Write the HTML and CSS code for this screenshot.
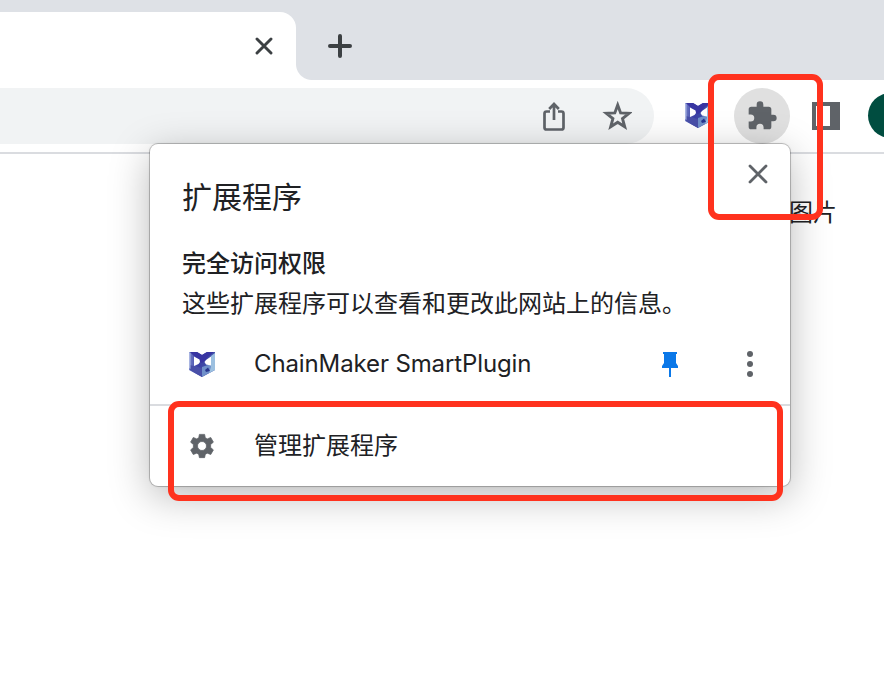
FILE: index.html
```html
<!DOCTYPE html>
<html lang="zh-CN">
<head>
<meta charset="utf-8">
<title>扩展程序</title>
<link rel="stylesheet" href="styles.css">
</head>
<body>
<svg class="defs" width="0" height="0" aria-hidden="true">
  <defs>
    <linearGradient id="lg" x1="0" y1="0" x2="1" y2="0">
      <stop offset="0" stop-color="#7380c8"/><stop offset=".35" stop-color="#3a3fa4"/><stop offset="1" stop-color="#4458ac"/>
    </linearGradient>
    <filter id="soft"><feGaussianBlur stdDeviation=".7"/></filter>
    <symbol id="logo" viewBox="0 0 28 28">
      <g filter="url(#soft)">
        <path fill="url(#lg)" d="M1 2h8l5 3 5-3h8v18l-13 7-13-7z"/>
        <path fill="#3836a2" d="M2 2h7l5 3 5-3h7l-6 5-3 4-3 2-4-2-3-4z"/>
        <path fill="#6f90ca" d="M14 17l12-4v7l-12 7z"/>
        <path fill="#9cc0e0" d="M23 6l4-3v17l-6 3 2-6z"/>
        <path fill="#4850a8" d="M2 15l12 3v9L2 20z"/>
        <path fill="#fff" d="M6 6.500l5.500 3 .5 2.500-1.500 2-4.500 2zM23 6.500L18 10l-1.500 2 1.500 2.500 5 1z"/>
        <path fill="#27358f" d="M17 20l3-2.500 2 3.500-4 1z"/>
        <path fill="#a9b5e2" d="M1 2l1.500 1v16L1 18z"/>
      </g>
    </symbol>
  </defs>
</svg>
<header class="tabs">
  <div class="tab">
    <svg width="18" height="18" viewBox="0 0 18 18"><path class="line" d="M2 2l14 14M16 2L2 16"/></svg>
  </div>
  <div class="strip">
    <svg width="24" height="24" viewBox="0 0 24 24"><path class="plus" d="M12 2v20M2 12h20"/></svg>
  </div>
</header>
<nav class="toolbar">
  <div class="address">
    <svg width="24" height="30" viewBox="0 0 24 30"><path class="share" d="M8 10.500H4.500a2 2 0 0 0-2 2v14a2 2 0 0 0 2 2h15a2 2 0 0 0 2-2v-14a2 2 0 0 0-2-2H16M12 19V3.500M7.200 8L12 3l4.800 5"/></svg>
    <svg width="30" height="30" viewBox="0 0 30 30"><path class="star" d="M15 4l2.900 7.900 8.500.4-6.600 5.300 2.200 8.200-7-4.600-7 4.600 2.200-8.200-6.600-5.300 8.500-.4z" transform="translate(.7 0)"/></svg>
  </div>
  <svg class="pinned" width="28" height="28"><use href="#logo"/></svg>
  <div class="puzzle">
    <svg width="32" height="32" viewBox="0 0 24 24"><path d="M20.500 11H19V7a2 2 0 0 0-2-2h-4V3.500a2.500 2.500 0 0 0-5 0V5H4a2 2 0 0 0-2 2v3.800h1.500a2.700 2.700 0 0 1 0 5.400H2V20a2 2 0 0 0 2 2h3.800v-1.500a2.700 2.700 0 0 1 5.400 0V22H17a2 2 0 0 0 2-2v-4h1.500a2.500 2.500 0 0 0 0-5z"/></svg>
  </div>
  <div class="side"></div>
  <div class="avatar"></div>
</nav>
<main class="page"><span>图片</span></main>

<section class="popup">
  <div class="head">
    <h1>扩展程序</h1>
    <svg width="20" height="20" viewBox="0 0 20 20"><path class="dismiss" d="M2 2l16 16M18 2L2 18"/></svg>
  </div>
  <h2>完全访问权限</h2>
  <p>这些扩展程序可以查看和更改此网站上的信息。</p>
  <div class="row">
    <svg class="icon" width="28" height="28"><use href="#logo"/></svg>
    <span class="name">ChainMaker SmartPlugin</span>
    <svg class="pin" width="16" height="28" viewBox="0 0 16 28"><path d="M1 2h14v2h-1v9l2 3v2H9v9H7v-9H0v-2l2-3V4H1z"/></svg>
    <svg class="more" width="6" height="26" viewBox="0 0 6 26"><circle cx="3" cy="3" r="3"/><circle cx="3" cy="13" r="3"/><circle cx="3" cy="23" r="3"/></svg>
  </div>
  <div class="manage">
    <svg class="gear" width="30" height="30" viewBox="0 0 24 24"><path fill-rule="evenodd" stroke="#5f6368" stroke-width=".6" stroke-linejoin="round" d="M9.900 2.700h4.200l.5 2.600 1.600 1 2.800-1.100 2.100 3.700-2.200 1.900v2.400l2.200 1.900-2.100 3.700-2.800-1.100-1.600 1-.5 2.600H9.900l-.5-2.600-1.600-1L5 18.800l-2.100-3.700 2.200-1.900v-2.400L2.900 8.900 5 5.200l2.800 1.100 1.600-1zM12 8.400a3.600 3.600 0 1 0 0 7.200 3.600 3.600 0 0 0 0-7.200z"/></svg>
    <span>管理扩展程序</span>
  </div>
</section>
<div class="mark mark-top"></div>
<div class="mark mark-bottom"></div>
</body>
</html>
```
FILE: styles.css
```css
* { box-sizing: border-box; }
body {
  margin: 0;
  height: 700px;
  overflow: hidden;
  position: relative;
  background: #fff;
  color: #202124;
  font: 24px/36px Inter, "Noto Sans CJK SC", sans-serif;
}
svg { display: block; flex: none; }
.defs { position: absolute; }
.tabs { display: flex; height: 80px; padding-top: 12px; background: #dee1e6; }
.tab {
  width: 296px;
  display: flex;
  align-items: center;
  justify-content: flex-end;
  padding-right: 23px;
  background: #fff;
  border-top-right-radius: 16px;
}
.strip {
  flex: 1;
  display: flex;
  align-items: center;
  padding-left: 32px;
  background: radial-gradient(circle at 16px 0, #dee1e6 15.500px, #fff 16.500px) left bottom / 16px 16px no-repeat;
}
.line, .plus, .share, .star, .dismiss { fill: none; stroke: #5f6368; }
.line { stroke: #3c4043; stroke-width: 2.900; stroke-linecap: round; }
.plus { stroke: #3c4043; stroke-width: 4; stroke-linecap: round; }
.share { stroke-width: 2.700; }
.star { stroke-width: 2.900; }
.dismiss { stroke-width: 2.800; stroke-linecap: round; }
.toolbar { display: flex; height: 74px; padding: 8px 0; border-bottom: 2px solid #dadce0; }
.address {
  flex: none;
  width: 654px;
  height: 56px;
  display: flex;
  align-items: center;
  justify-content: flex-end;
  gap: 36px;
  padding-right: 22px;
  background: #f1f3f4;
  border-radius: 0 28px 28px 0;
}
.pinned { margin: 13px 22px 0 30px; }
.puzzle {
  flex: none;
  width: 56px;
  height: 56px;
  padding: 12px;
  border-radius: 50%;
  background: #e0e0e0;
}
.puzzle path, .gear path, .more { fill: #5f6368; }
.side {
  flex: none;
  width: 28px;
  height: 28px;
  margin: 14px 0 0 22px;
  border: 4px solid #5f6368;
  border-right-width: 10px;
}
.avatar { flex: none; width: 45px; height: 45px; margin: 5px 0 0 28px; border-radius: 50%; background: #004d40; }
.page { display: flex; justify-content: flex-end; padding: 41px 47px 0 0; }
.popup {
  position: absolute;
  left: 150px;
  top: 144px;
  width: 640px;
  height: 342px;
  background: #fff;
  border-radius: 8px;
  box-shadow: 0 0 0 1px rgba(0,0,0,.2), 0 0 3px rgba(0,0,0,.12), 0 10px 40px rgba(0,0,0,.28);
}
.head { display: flex; justify-content: space-between; padding: 20px 22px 0 32px; }
h1 { margin: 11px 0 0; font-size: 30px; line-height: 44px; font-weight: 400; }
h2 { margin: 27px 32px 0; font-size: 24px; line-height: 36px; font-weight: 500; }
p { margin: 4px 32px 0; white-space: nowrap; }
.row { display: flex; align-items: center; height: 82px; padding-top: 1px; }
.icon { margin-left: 38px; }
.name { margin-left: 38px; flex: 1; white-space: nowrap; letter-spacing: -.12px; }
.pin { fill: #0b78e8; margin-right: 69px; }
.more { margin-right: 37px; }
.manage { display: flex; align-items: center; height: 82px; border-top: 2px solid #dadce0; padding-left: 37px; }
.manage span { margin-left: 37px; }
.mark { position: absolute; border: 6px solid #ff321e; border-radius: 11px; }
.mark-top { left: 708px; top: 74px; width: 115px; height: 146px; }
.mark-bottom { left: 168px; top: 401px; width: 615px; height: 100px; }
```
